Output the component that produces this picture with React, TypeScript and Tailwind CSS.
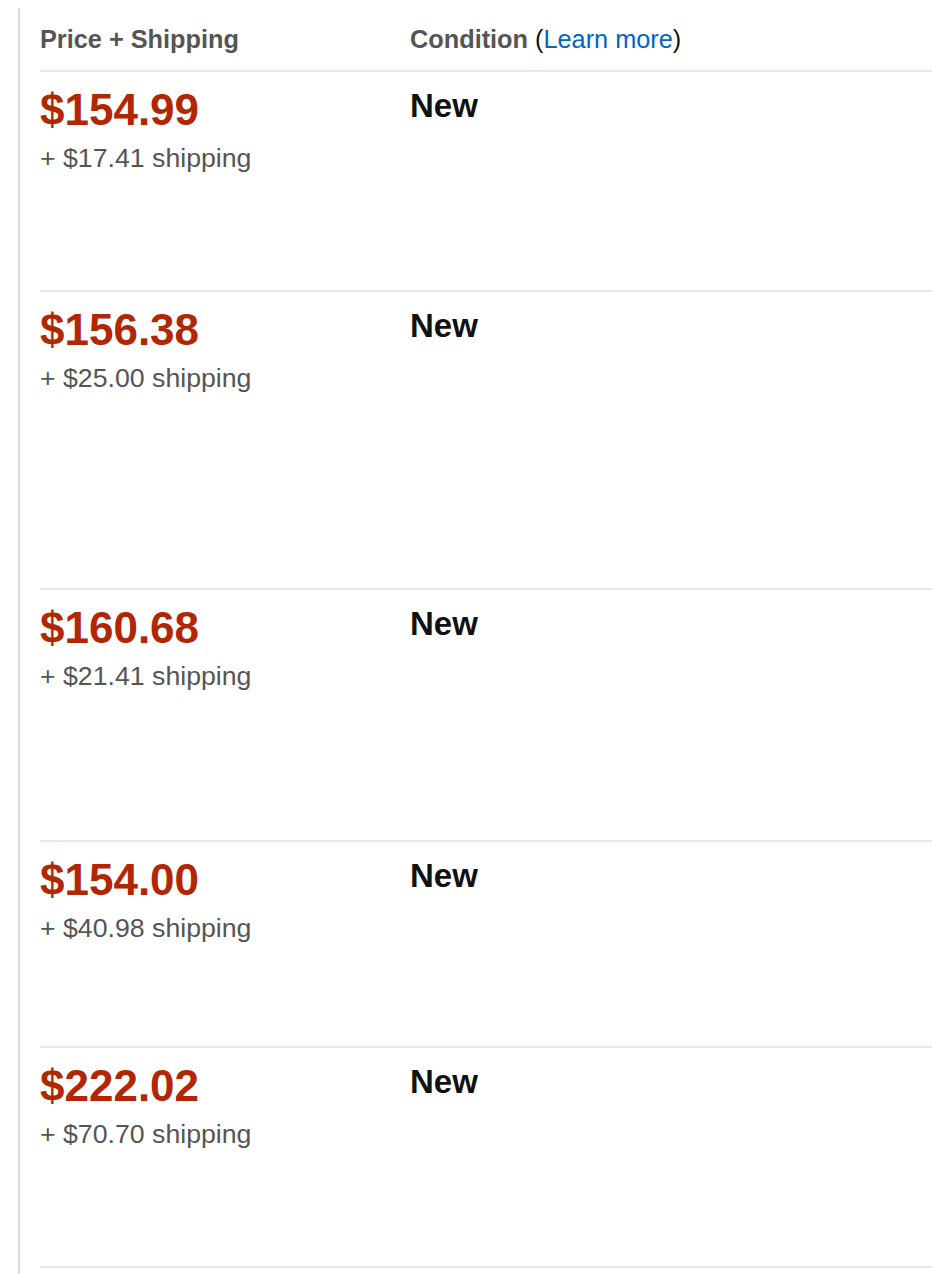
import React from 'react';

type Offer = {
  price: string;
  shipping: string;
  condition: string;
  height: string;
};

const offers: Offer[] = [
  { price: '$154.99', shipping: '+ $17.41 shipping', condition: 'New', height: 'h-[218px]' },
  { price: '$156.38', shipping: '+ $25.00 shipping', condition: 'New', height: 'h-[296px]' },
  { price: '$160.68', shipping: '+ $21.41 shipping', condition: 'New', height: 'h-[250px]' },
  { price: '$154.00', shipping: '+ $40.98 shipping', condition: 'New', height: 'h-[204px]' },
  { price: '$222.02', shipping: '+ $70.70 shipping', condition: 'New', height: 'h-[218px]' },
];

const App = () => {
  return (
    <div className="bg-white pt-[8px] pl-[18px] font-['Liberation_Sans',Arial,sans-serif]">
      <div className="border-l-2 border-[#dddddd] pl-[20px] pb-[20px]">
        {/* Header */}
        <div className="grid grid-cols-[370px_1fr] border-b-2 border-[#e7e7e7] pt-[16px] pb-[16px] text-[25.3px] leading-[30px]">
          <div className="font-bold text-[#555555]">Price + Shipping</div>
          <div className="text-[#111111]">
            <span className="font-bold text-[#555555]">Condition</span> (
            <a href="#" className="text-[#0066c0]">Learn more</a>)
          </div>
        </div>

        {/* Offers */}
        {offers.map((offer) => (
          <div
            key={offer.price}
            className={`grid grid-cols-[370px_1fr] border-b-2 border-[#e7e7e7] box-content ${offer.height}`}
          >
            <div className="pt-[16px]">
              <div className="text-[44px] leading-[44px] font-bold text-[#b12704]">{offer.price}</div>
              <div className="mt-[10px] text-[26.7px] leading-[32px] text-[#555555]">{offer.shipping}</div>
            </div>
            <div className="pt-[14px]">
              <div className="text-[33px] leading-[40px] font-bold text-[#111111]">{offer.condition}</div>
            </div>
          </div>
        ))}
      </div>
    </div>
  );
};

export default App;
